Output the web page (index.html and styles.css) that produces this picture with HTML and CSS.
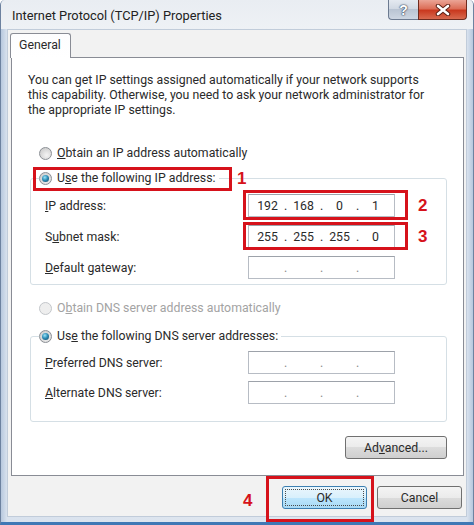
FILE: index.html
```html
<!DOCTYPE html>
<html lang="en">
<head>
  <meta charset="UTF-8">
  <title>Internet Protocol (TCP/IP) Properties</title>
  <link rel="stylesheet" href="styles.css">
</head>
<body>
  <div class="window">
    <div class="titlebar">
      <span class="title">Internet Protocol (TCP/IP) Properties</span>
      <div class="caption-btns">
        <span class="cap help">?</span>
        <span class="cap close">
          <svg width="16" height="12" viewBox="0 0 16 12">
            <path d="M3 2 L13 10 M13 2 L3 10" stroke="#5a1f14" stroke-width="4.5" stroke-linecap="round"/>
            <path d="M3 2 L13 10 M13 2 L3 10" stroke="#fff" stroke-width="2.6" stroke-linecap="round"/>
          </svg>
        </span>
      </div>
    </div>

    <div class="client">
      <div class="tabs"><span class="tab">General</span></div>

      <div class="panel">
        <p class="intro">You can get IP settings assigned automatically if your network supports<br>this capability. Otherwise, you need to ask your network administrator for<br>the appropriate IP settings.</p>

        <div class="option first"><span class="radio"></span><span><u>O</u>btain an IP address automatically</span></div>

        <fieldset class="group ip-group">
          <legend><span class="option"><span class="radio on"></span><span>U<u>s</u>e the following IP address:</span></span></legend>
          <div class="field">
            <label><u>I</u>P address:</label>
            <div class="ip"><span class="oct">192</span><span class="dot">.</span><span class="oct">168</span><span class="dot">.</span><span class="oct">0</span><span class="dot">.</span><span class="oct">1</span></div>
          </div>
          <div class="field">
            <label>S<u>u</u>bnet mask:</label>
            <div class="ip"><span class="oct">255</span><span class="dot">.</span><span class="oct">255</span><span class="dot">.</span><span class="oct">255</span><span class="dot">.</span><span class="oct">0</span></div>
          </div>
          <div class="field">
            <label><u>D</u>efault gateway:</label>
            <div class="ip empty"><span class="oct"></span><span class="dot">.</span><span class="oct"></span><span class="dot">.</span><span class="oct"></span><span class="dot">.</span><span class="oct"></span></div>
          </div>
        </fieldset>

        <div class="option disabled"><span class="radio"></span><span>O<u>b</u>tain DNS server address automatically</span></div>

        <fieldset class="group dns-group">
          <legend><span class="option"><span class="radio on"></span><span>Us<u>e</u> the following DNS server addresses:</span></span></legend>
          <div class="field">
            <label><u>P</u>referred DNS server:</label>
            <div class="ip empty"><span class="oct"></span><span class="dot">.</span><span class="oct"></span><span class="dot">.</span><span class="oct"></span><span class="dot">.</span><span class="oct"></span></div>
          </div>
          <div class="field">
            <label><u>A</u>lternate DNS server:</label>
            <div class="ip empty"><span class="oct"></span><span class="dot">.</span><span class="oct"></span><span class="dot">.</span><span class="oct"></span><span class="dot">.</span><span class="oct"></span></div>
          </div>
        </fieldset>

        <div class="advanced-row"><button class="btn advanced">Ad<u>v</u>anced...</button></div>
      </div>

      <div class="dialog-btns">
        <button class="btn default"><span class="focus">OK</span></button>
        <button class="btn">Cancel</button>
      </div>
    </div>

    <!-- red step markers -->
    <div class="mark mark-1"></div>
    <div class="mark mark-2"></div>
    <div class="mark mark-3"></div>
    <div class="mark mark-4"></div>
    <span class="step step-1">1</span>
    <span class="step step-2">2</span>
    <span class="step step-3">3</span>
    <span class="step step-4">4</span>
  </div>
</body>
</html>
```

FILE: styles.css
```css
body {
  margin: 0;
  background: #fff;
  font-family: Roboto, "Liberation Sans", sans-serif;
  font-size: 12.3px;
  color: #2a2a2a;
}
.window {
  position: relative;
  width: 474px;
  height: 525px;
  box-sizing: border-box;
  display: flex;
  flex-direction: column;
  border-left: 1px solid #6d82a0;
  border-right: 1px solid #6d82a0;
  border-bottom: 3px solid #3f78b5;
  border-radius: 5px 5px 0 0;
  background: linear-gradient(90deg, #b7c8de 0, #d9e2ee 6px, #dfe6ef 50%, #d9e2ee calc(100% - 6px), #b7c8de 100%);
  overflow: hidden;
}
.titlebar {
  height: 29px;
  display: flex;
  align-items: center;
  padding: 0 6px 0 11px;
  background: linear-gradient(#e9edf2, #eef1f5);
}
.title {
  font-size: 12.8px;
  color: #222;
  margin-top: 1px;
}
.caption-btns {
  margin-left: auto;
  align-self: flex-start;
  display: flex;
}
.cap {
  height: 20px;
  box-sizing: border-box;
  display: flex;
  align-items: center;
  justify-content: center;
}
.help {
  width: 30px;
  border: 1px solid #6b7a90;
  border-top: none;
  border-right: none;
  border-radius: 0 0 0 4px;
  background: linear-gradient(#e4e9f0 0, #cfd7e2 50%, #b9c4d3 50%, #cdd6e2 100%);
  color: #fff;
  font: bold 14px "Liberation Sans", sans-serif;
  text-shadow: 0 0 1px #3d4c63, 0 0 1px #3d4c63, 0 0 2px #3d4c63;
}
.close {
  width: 49px;
  border: 1px solid #6e2b1f;
  border-top: none;
  border-radius: 0 0 4px 0;
  background: linear-gradient(#eba596 0, #dc6e58 45%, #c9391f 55%, #d86a4f 100%);
}
.client {
  flex: 1;
  margin: 0 6px 5px;
  border: 1px solid #c1ccda;
  background: #f2f2f2;
  display: flex;
  flex-direction: column;
}
.tabs {
  padding: 3px 0 0 2px;
  display: flex;
}
.tab {
  position: relative;
  z-index: 1;
  height: 25px;
  box-sizing: border-box;
  line-height: 23px;
  padding: 0 9px 0 8px;
  margin-bottom: -1px;
  border: 1px solid #898c95;
  border-bottom: none;
  border-radius: 3px 3px 0 0;
  background: linear-gradient(#fdfdfe, #ffffff);
}
.panel {
  margin: 0 2px 0 3px;
  border: 1px solid #898c95;
  background: #fff;
  padding: 0 16px 16px 16px;
  display: flex;
  flex-direction: column;
}
.intro {
  margin: 15px 0 0;
  line-height: 15px;
  white-space: nowrap;
}
.option {
  display: flex;
  align-items: center;
  gap: 5px;
  height: 16px;
  white-space: nowrap;
}
.option.first {
  margin: 27px 0 0 11px;
}
.option.disabled {
  margin: 15px 0 0 11px;
  color: #a3a3a3;
}
.radio {
  position: relative;
  width: 13px;
  height: 13px;
  box-sizing: border-box;
  border-radius: 50%;
  border: 1px solid #8b8f95;
  background: radial-gradient(circle at 60% 65%, #f4f4f4 0, #d2d2d2 70%, #c4c4c4 100%);
}
.radio.on::after {
  content: "";
  position: absolute;
  left: 2px;
  top: 2px;
  width: 7px;
  height: 7px;
  border-radius: 50%;
  background: radial-gradient(circle at 40% 35%, #9be3f7 0, #2f8fb8 45%, #0d3e5a 100%);
}
.disabled .radio {
  border-color: #c3c6ca;
  background: #eeeeee;
}
.group {
  margin: 8px 0 0 2px;
  padding: 0 0 5px 8px;
  border: 1px solid #d5dfe5;
  border-radius: 3px;
  min-width: 0;
}
.group legend {
  padding: 0 3px 0 0;
  height: 18px;
  display: flex;
  align-items: center;
}
.ip-group .field:first-of-type {
  margin-top: 7px;
}
.dns-group {
  margin-top: 11px;
  padding-bottom: 17px;
}
.dns-group .field:first-of-type {
  margin-top: 6px;
}
.field {
  display: flex;
  align-items: center;
  padding-left: 6px;
  margin-top: 8px;
}
.dns-group .field {
  margin-top: 7px;
}
.field label {
  width: 203px;
}
.ip {
  width: 147px;
  height: 23px;
  box-sizing: border-box;
  display: flex;
  align-items: center;
  padding-left: 5px;
  border: 1px solid #b7bcc4;
  border-top-color: #9da2aa;
  background: #fff;
}
.oct {
  width: 27px;
  text-align: center;
}
.dot {
  width: 9px;
  text-align: center;
}
.ip.empty .dot {
  color: #8a8a8a;
}
.advanced-row {
  margin-top: 14px;
  display: flex;
  justify-content: flex-end;
}
.btn {
  height: 23px;
  width: 85px;
  box-sizing: border-box;
  padding: 0;
  border: 1px solid #707070;
  border-radius: 3px;
  background: linear-gradient(#f4f4f4 0, #ebebeb 50%, #dcdcdc 50%, #cfcfcf 100%);
  font-family: inherit;
  font-size: 12.3px;
  color: #2a2a2a;
}
.btn.advanced {
  width: 102px;
}
.btn.default {
  border-color: #3c7fb1;
  background: linear-gradient(#eaf6fd 0, #d9f0fc 50%, #bee6fd 50%, #a7d9f5 100%);
  padding: 2px;
}
.btn .focus {
  display: flex;
  align-items: center;
  justify-content: center;
  height: 100%;
  border: 1px dotted #4a4a4a;
  box-sizing: border-box;
}
.dialog-btns {
  display: flex;
  justify-content: flex-end;
  gap: 10px;
  margin: 10px 4px 0 0;
}
.mark {
  position: absolute;
  box-sizing: border-box;
  border: 3px solid #d6121b;
}
.mark-1 { left: 32px; top: 167px; width: 199px; height: 24px; }
.mark-2 { left: 242px; top: 190px; width: 165px; height: 30px; }
.mark-3 { left: 242px; top: 222px; width: 165px; height: 28px; }
.mark-4 { left: 265px; top: 476px; width: 108px; height: 46px; }
.step {
  position: absolute;
  font: bold 17px/17px "Liberation Sans", sans-serif;
  color: #d6121b;
}
.step-1 { left: 236px; top: 170px; }
.step-2 { left: 417px; top: 197px; }
.step-3 { left: 417px; top: 228px; }
.step-4 { left: 242px; top: 492px; }
```
